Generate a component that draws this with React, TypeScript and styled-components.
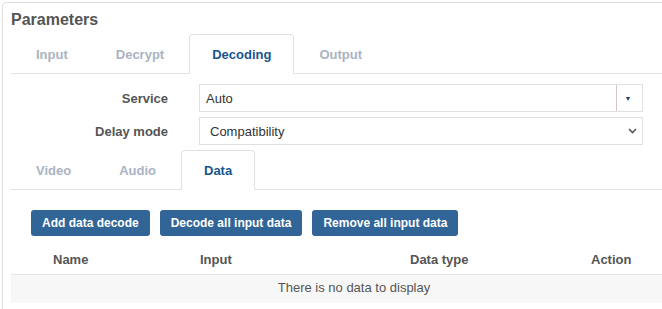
import React from "react";
import styled, { createGlobalStyle } from "styled-components";

const Global = createGlobalStyle`
  html, body { margin: 0; padding: 0; overflow: hidden; background: #fff; }
  body { font-family: "Liberation Sans", Arial, sans-serif; color: #555; }
`;

const Panel = styled.div`
  margin: 2px 0 0 2px;
  width: 704px;
  border: 1px solid #dedede;
  border-radius: 4px;
  padding: 7px 8px 0 8px;
  box-sizing: border-box;
  height: 330px;
`;

const Title = styled.div`
  font-size: 16px;
  line-height: 20px;
  font-weight: bold;
  color: #555;
`;

const TabBar = styled.div<{ $mt: number }>`
  display: flex;
  margin-top: ${(p) => p.$mt}px;
  padding-left: 2px;
  border-bottom: 1px solid #e3e3e3;
  height: 39px;
`;

const Tab = styled.div<{ $active?: boolean }>`
  box-sizing: border-box;
  height: 40px;
  margin-right: 2px;
  padding: 0 22px;
  display: flex;
  align-items: center;
  font-size: 13px;
  font-weight: bold;
  border: 1px solid ${(p) => (p.$active ? "#e0e0e0" : "transparent")};
  border-bottom-color: ${(p) => (p.$active ? "#fff" : "transparent")};
  border-radius: 4px 4px 0 0;
  background: ${(p) => (p.$active ? "#fff" : "transparent")};
  color: ${(p) => (p.$active ? "#18558f" : "#a9b3c3")};
`;

const Form = styled.div`
  display: grid;
  grid-template-columns: 157px 444px;
  column-gap: 31px;
  row-gap: 5px;
  margin-top: 10px;
  align-items: center;
`;

const Label = styled.div`
  text-align: right;
  font-size: 13px;
  font-weight: bold;
  color: #555;
`;

const SelectBox = styled.div<{ $pad: number }>`
  box-sizing: border-box;
  height: 28px;
  border: 1px solid #e0e0e0;
  display: flex;
  align-items: center;
  padding-left: ${(p) => p.$pad}px;
  font-size: 13px;
  color: #333;
`;

const SelectText = styled.span`
  flex: 1;
`;

const DropSegment = styled.div`
  width: 26px;
  height: 100%;
  border-left: 1px solid #d3c6c7;
  display: flex;
  align-items: center;
  justify-content: center;
  padding-right: 3px;
  box-sizing: border-box;
  font-size: 7px;
  color: #1d3f6e;
`;

const Chevron = styled.div`
  display: flex;
  align-items: center;
  padding-right: 5px;
`;

const Buttons = styled.div`
  display: flex;
  gap: 10px;
  padding-left: 20px;
  margin-top: 20px;
`;

const Button = styled.button`
  height: 26px;
  padding: 0 11px;
  border: none;
  border-radius: 3px;
  background: #326597;
  color: #fff;
  font-family: "Liberation Sans", Arial, sans-serif;
  font-size: 12px;
  font-weight: bold;
`;

const Table = styled.div`
  margin-top: 8px;
`;

const HeadRow = styled.div`
  display: grid;
  grid-template-columns: 147px 210px 181px auto;
  padding-left: 42px;
  height: 30px;
  align-items: center;
  border-bottom: 1px solid #e6e6e6;
  font-size: 13px;
  font-weight: bold;
  color: #555;
`;

const EmptyRow = styled.div`
  height: 28px;
  background: #f7f7f7;
  text-align: center;
  font-size: 13px;
  line-height: 25px;
  color: #555;
`;

export default function App() {
  return (
    <>
      <Global />
      <Panel>
        <Title>Parameters</Title>
        <TabBar $mt={4}>
          <Tab>Input</Tab>
          <Tab>Decrypt</Tab>
          <Tab $active>Decoding</Tab>
          <Tab>Output</Tab>
        </TabBar>
        <Form>
          <Label>Service</Label>
          <SelectBox $pad={6}>
            <SelectText>Auto</SelectText>
            <DropSegment>▼</DropSegment>
          </SelectBox>
          <Label>Delay mode</Label>
          <SelectBox $pad={10}>
            <SelectText>Compatibility</SelectText>
            <Chevron>
              <svg width="9" height="6" viewBox="0 0 9 6">
                <path d="M1 1 L4.5 4.5 L8 1" fill="none" stroke="#555" strokeWidth="1.6" />
              </svg>
            </Chevron>
          </SelectBox>
        </Form>
        <TabBar $mt={5}>
          <Tab>Video</Tab>
          <Tab>Audio</Tab>
          <Tab $active>Data</Tab>
        </TabBar>
        <Buttons>
          <Button>Add data decode</Button>
          <Button>Decode all input data</Button>
          <Button>Remove all input data</Button>
        </Buttons>
        <Table>
          <HeadRow>
            <span>Name</span>
            <span>Input</span>
            <span>Data type</span>
            <span>Action</span>
          </HeadRow>
          <EmptyRow>There is no data to display</EmptyRow>
        </Table>
      </Panel>
    </>
  );
}
